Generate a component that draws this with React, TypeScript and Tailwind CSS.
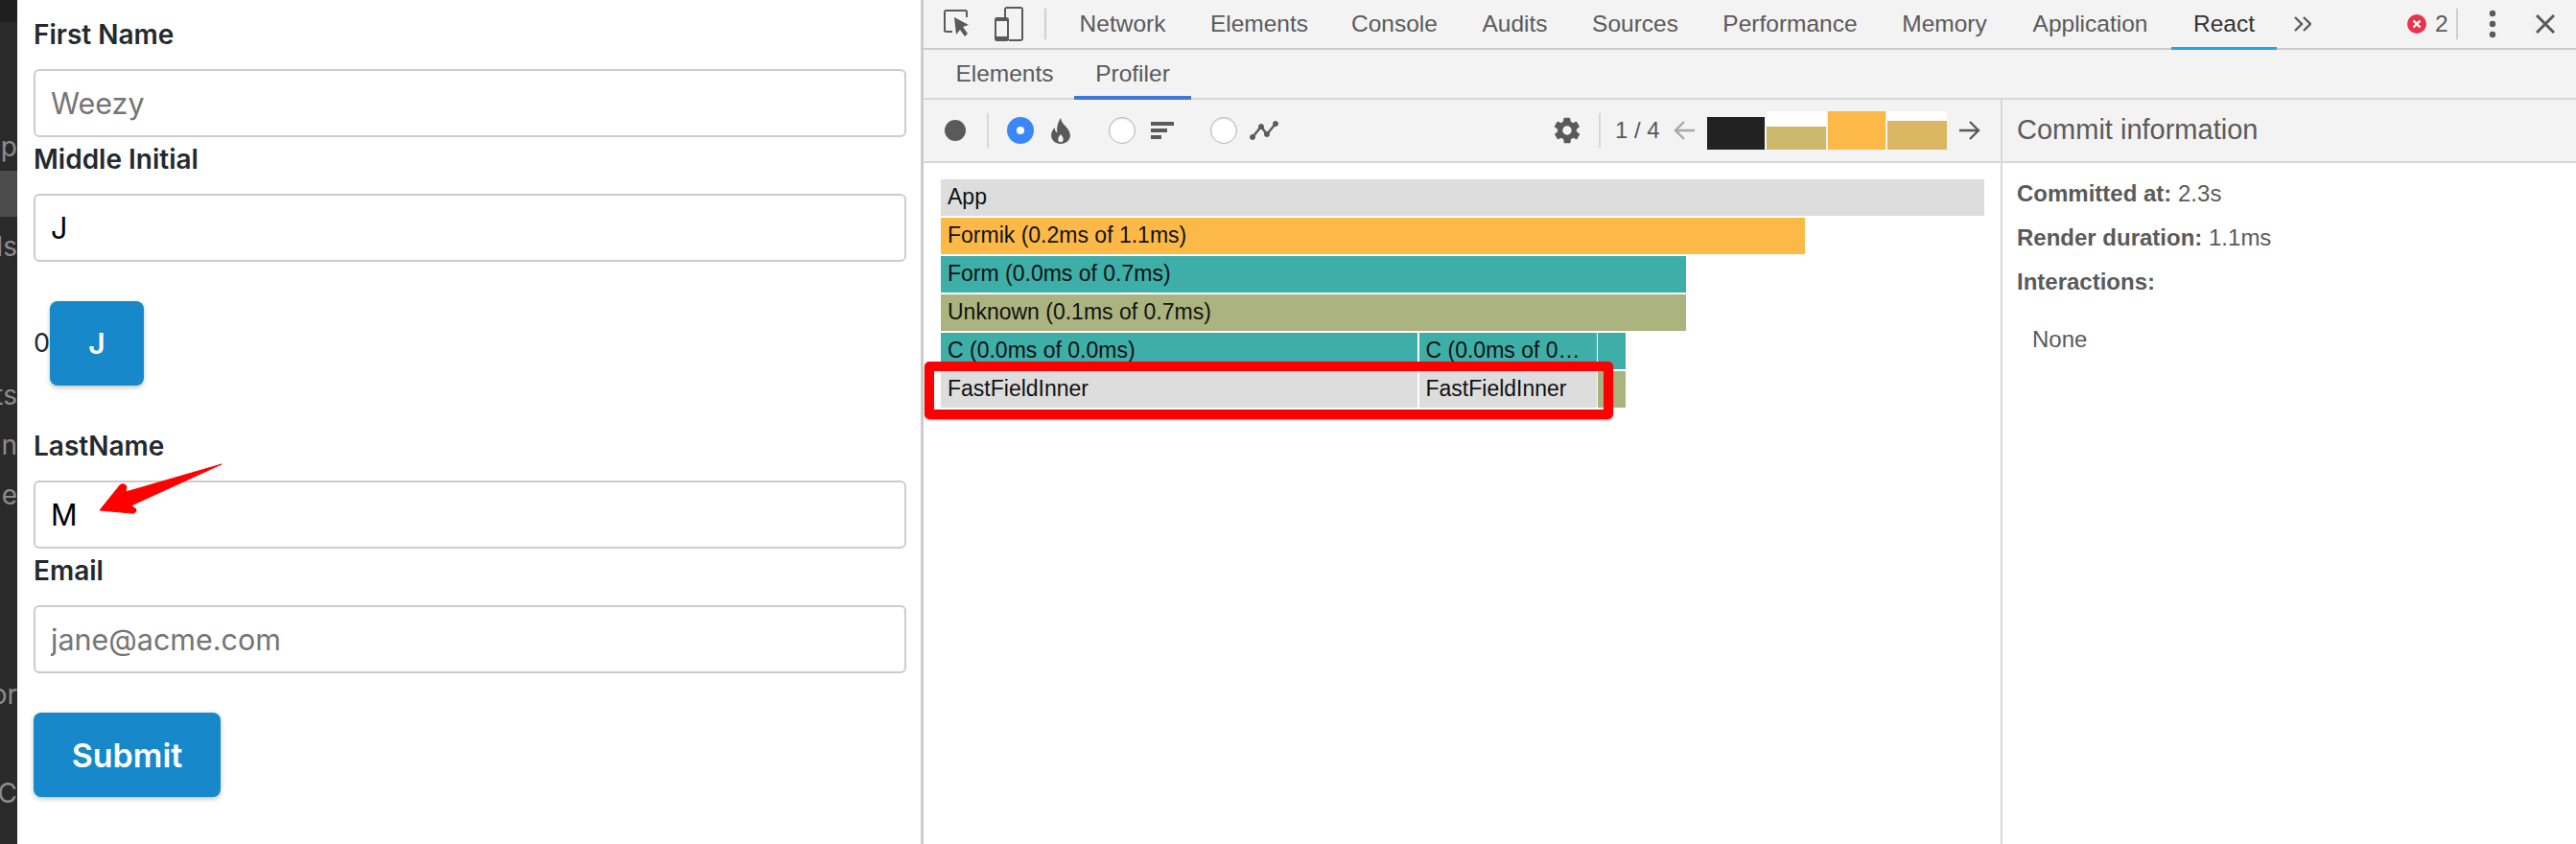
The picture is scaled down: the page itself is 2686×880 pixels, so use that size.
// Form page next to the React devtools profiler, with the two annotations on top

import React from 'react';

const FORM_FONT = "font-['Inter','Noto_Sans',sans-serif]";

const SIDE_ROWS: { text: string; active?: boolean }[] = [
  { text: '' },
  { text: '' },
  { text: 'p' },
  { text: '', active: true },
  { text: 'ds' },
  { text: '' },
  { text: '' },
  { text: 'nts' },
  { text: 'n' },
  { text: 'e' },
  { text: '' },
  { text: '' },
  { text: '' },
  { text: 'or' },
  { text: '' },
  { text: 'C' },
];

const MAIN_TABS = [
  { label: 'Network', w: 'w-[139px]' },
  { label: 'Elements', w: 'w-[146px]' },
  { label: 'Console', w: 'w-[136px]' },
  { label: 'Audits', w: 'w-[115px]' },
  { label: 'Sources', w: 'w-[136px]' },
  { label: 'Performance', w: 'w-[187px]' },
  { label: 'Memory', w: 'w-[135px]' },
  { label: 'Application', w: 'w-[169px]' },
];

interface FlameBar {
  label: string;
  w: string;
  bg: string;
}

const FLAME_ROWS: FlameBar[][] = [
  [{ label: 'App', w: 'w-[1088px]', bg: 'bg-[#dddddd]' }],
  [{ label: 'Formik (0.2ms of 1.1ms)', w: 'w-[901px]', bg: 'bg-[#fdb947]' }],
  [{ label: 'Form (0.0ms of 0.7ms)', w: 'w-[777px]', bg: 'bg-[#3eaea8]' }],
  [{ label: 'Unknown (0.1ms of 0.7ms)', w: 'w-[777px]', bg: 'bg-[#abb37f]' }],
  [
    { label: 'C (0.0ms of 0.0ms)', w: 'w-[497px]', bg: 'bg-[#3eaea8]' },
    { label: 'C (0.0ms of 0…', w: 'w-[185px]', bg: 'bg-[#3eaea8]' },
    { label: '', w: 'w-[29px]', bg: 'bg-[#3eaea8]' },
  ],
  [
    { label: 'FastFieldInner', w: 'w-[497px]', bg: 'bg-[#dddddd]' },
    { label: 'FastFieldInner', w: 'w-[185px]', bg: 'bg-[#dddddd]' },
    { label: '', w: 'w-[29px]', bg: 'bg-[#abb37f]' },
  ],
];

function Field({ label, value, placeholder }: { label: string; value?: string; placeholder?: string }) {
  return (
    <div className="flex flex-col">
      <label className="h-[59px] text-[28px] leading-[46px] font-semibold text-[#24292e]">{label}</label>
      <input
        readOnly
        value={value}
        placeholder={placeholder}
        className="h-[71px] w-[910px] rounded-[6px] border-2 border-[#cccccc] bg-white px-[16px] text-[30.500px] text-black outline-none placeholder:text-[#757575]"
      />
    </div>
  );
}

function SmallIcons() {
  return (
    <div className="flex items-center pl-[21px]">
      <svg width="26" height="32" viewBox="0 0 26 32" className="text-[#5a5a5a]">
        <path d="M9 24H2.5a1.5 1.5 0 0 1-1.5-1.5V3.5A1.5 1.5 0 0 1 2.5 2h20A1.5 1.5 0 0 1 24 3.5V9" fill="none" stroke="currentColor" strokeWidth="2" />
        <path d="M11 9l15 8-6 2 5 7-3 3-5-7-4 5z" fill="currentColor" />
      </svg>
      <svg width="30" height="36" viewBox="0 0 30 36" className="ml-[27px] text-[#5a5a5a]">
        <path d="M11 12V3a2 2 0 0 1 2-2h14a2 2 0 0 1 2 2v30a2 2 0 0 1-2 2H15" fill="none" stroke="currentColor" strokeWidth="2" />
        <rect x="1" y="12" width="13" height="23" rx="1.5" fill="none" stroke="currentColor" strokeWidth="2" />
        <rect x="1" y="31" width="13" height="4" fill="currentColor" />
        <rect x="1" y="12" width="13" height="3" fill="currentColor" />
      </svg>
      <div className="ml-[22px] h-[32px] w-[2px] bg-[#cfcfcf]" />
    </div>
  );
}

function ModeRadio({ on }: { on?: boolean }) {
  if (on) {
    return (
      <span className="flex h-[28px] w-[28px] items-center justify-center rounded-full bg-[#3b87f7]">
        <span className="block h-[8px] w-[8px] rounded-full bg-white" />
      </span>
    );
  }
  return <span className="block h-[28px] w-[28px] rounded-full border border-[#b5b5b5] bg-white shadow-[inset_0_1px_2px_rgba(0,0,0,0.12)]" />;
}

function CommitChart() {
  const bars = [
    { w: 'w-[60px]', h: 'h-[34px]', bg: 'bg-[#222222]', back: '' },
    { w: 'w-[62px]', h: 'h-[24px]', bg: 'bg-[#ceb86d]', back: 'bg-white' },
    { w: 'w-[60px]', h: 'h-[40px]', bg: 'bg-[#fdb947]', back: 'bg-white' },
    { w: 'w-[62px]', h: 'h-[30px]', bg: 'bg-[#dcb763]', back: 'bg-white' },
  ];
  return (
    <div className="flex h-[40px] gap-[2px]">
      {bars.map((b, i) => (
        <div key={i} className={`flex items-end ${b.w} ${b.back}`}>
          <div className={`w-full ${b.h} ${b.bg}`} />
        </div>
      ))}
    </div>
  );
}

function Arrow({ dir, color }: { dir: 'left' | 'right'; color: string }) {
  return (
    <svg width="22" height="20" viewBox="0 0 22 20" fill="none" stroke={color} strokeWidth="2.4">
      {dir === 'left' ? <path d="M22 10H2M11 1l-9 9 9 9" /> : <path d="M0 10h20M11 1l9 9-9 9" />}
    </svg>
  );
}

export default function App() {
  return (
    <div className="relative flex h-[880px] w-[2686px] overflow-hidden bg-white">
      {/* clipped docs sidebar */}
      <div className="flex w-[18px] shrink-0 flex-col overflow-hidden bg-[#2b2a2a] font-['Inter',sans-serif] text-[28px] text-[#8c8c8c]">
        <div className="h-[23px] shrink-0 bg-[#1f1f1f]" />
        {SIDE_ROWS.map((row, i) => (
          <div key={i} className="flex h-[51.900px] shrink-0 items-center justify-end whitespace-nowrap">
            {row.active ? <div className="mb-[5px] h-[48px] w-full bg-[#4c4b4b]" /> : row.text}
          </div>
        ))}
      </div>

      {/* form */}
      <div className={`w-[942px] shrink-0 pt-[13px] pl-[17px] ${FORM_FONT}`}>
        <Field label="First Name" placeholder="Weezy" />
        <Field label="Middle Initial" value="J" />
        <div className="mt-[41px] mb-[40px] flex h-[88px] items-center text-[27px] text-[#24292e]">
          <span className="w-[17px]">0</span>
          <button className="h-[88px] w-[98px] rounded-[8px] bg-[#1789cb] text-[30px] font-semibold text-white shadow-[0_2px_5px_rgba(0,0,0,0.25)]">
            J
          </button>
        </div>
        <Field label="LastName" value="M" />
        <Field label="Email" placeholder="jane@acme.com" />
        <button className="mt-[41px] h-[88px] w-[195px] rounded-[8px] bg-[#1789cb] text-[34px] font-semibold text-white shadow-[0_2px_5px_rgba(0,0,0,0.25)]">
          Submit
        </button>
      </div>

      {/* devtools */}
      <div className="flex min-w-0 flex-1 flex-col border-l-[3px] border-[#cccccc] bg-white font-['Liberation_Sans',sans-serif] text-[24.500px] text-[#5a5a5a]">
        <div className="flex h-[52px] shrink-0 items-center border-b-2 border-[#cccccc] bg-[#f3f3f3]">
          <SmallIcons />
          <div className="ml-[10px] flex h-full items-center">
            {MAIN_TABS.map((t) => (
              <div key={t.label} className={`flex h-full items-center justify-center ${t.w}`}>
                {t.label}
              </div>
            ))}
            <div className="relative flex h-full w-[110px] items-center justify-center text-[#333333]">
              React
              <div className="absolute right-0 bottom-[-2px] left-0 h-[3px] bg-[#1ea7f0]" />
            </div>
          </div>
          <svg width="18" height="16" viewBox="0 0 18 16" fill="none" stroke="#5a5a5a" strokeWidth="2.4" className="ml-[18px]">
            <path d="M1 1l7 7-7 7M10 1l7 7-7 7" />
          </svg>
          <svg width="20" height="20" viewBox="0 0 20 20" className="ml-[100px]">
            <circle cx="10" cy="10" r="10" fill="#e8344a" />
            <path d="M6.5 6.5l7 7M13.5 6.5l-7 7" stroke="#fff" strokeWidth="2.4" />
          </svg>
          <span className="ml-[9px]">2</span>
          <div className="ml-[8px] h-[32px] w-[2px] bg-[#cfcfcf]" />
          <svg width="8" height="30" viewBox="0 0 8 30" fill="#5a5a5a" className="ml-[32px]">
            <circle cx="4" cy="4" r="3.2" />
            <circle cx="4" cy="15" r="3.2" />
            <circle cx="4" cy="26" r="3.2" />
          </svg>
          <svg width="20" height="20" viewBox="0 0 20 20" fill="none" stroke="#5a5a5a" strokeWidth="3" className="ml-[41px]">
            <path d="M1 1l18 18M19 1L1 19" />
          </svg>
        </div>

        <div className="flex h-[52px] shrink-0 items-center border-b-2 border-[#d8d8d8] bg-[#f3f3f3] pl-[12px]">
          <div className="flex h-full w-[145px] items-center justify-center">Elements</div>
          <div className="relative flex h-full w-[122px] items-center justify-center">
            Profiler
            <div className="absolute right-0 bottom-[-2px] left-0 h-[4px] bg-[#3b78d8]" />
          </div>
        </div>

        <div className="flex min-h-0 flex-1">
          {/* flame chart side */}
          <div className="flex w-[1125px] shrink-0 flex-col border-r-2 border-[#d8d8d8]">
            <div className="flex h-[66px] shrink-0 items-center border-b-2 border-[#d8d8d8] bg-[#f3f3f3] pl-[22px]">
              <span className="block h-[22px] w-[22px] rounded-full bg-[#5a5a5a]" />
              <div className="ml-[22px] h-[36px] w-[2px] bg-[#d8d8d8]" />
              <div className="ml-[19px]">
                <ModeRadio on />
              </div>
              <svg width="20" height="27" viewBox="0 0 22 30" fill="#5a5a5a" className="ml-[18px]">
                <path d="M11 0c1 5 3 7 6 10 3 3 5 7 5 10 0 6-5 10-11 10S0 26 0 20c0-4 2-7 4-9 0 3 1 5 3 6C6 11 8 4 11 0z" />
                <path d="M11 19c1.500 2 3 3.500 3 6a3 3 0 0 1-6 0c0-2.500 1.500-4 3-6z" fill="#f3f3f3" />
              </svg>
              <div className="ml-[40px]">
                <ModeRadio />
              </div>
              <svg width="24" height="18" viewBox="0 0 24 18" fill="#5a5a5a" className="ml-[16px]">
                <rect x="0" y="0" width="24" height="4" />
                <rect x="0" y="7" width="17" height="4" />
                <rect x="0" y="14" width="11" height="4" />
              </svg>
              <div className="ml-[38px]">
                <ModeRadio />
              </div>
              <svg width="30" height="20" viewBox="0 0 30 20" fill="#5a5a5a" stroke="#5a5a5a" className="ml-[13px]">
                <path d="M3 17L12 6l6 8 9-11" fill="none" strokeWidth="2.4" />
                <circle cx="3" cy="17" r="2.500" />
                <circle cx="12" cy="6" r="2.500" />
                <circle cx="18" cy="14" r="2.500" />
                <circle cx="27" cy="3" r="2.500" />
              </svg>
              <svg width="32" height="32" viewBox="0 0 24 24" fill="#5a5a5a" className="ml-[285px]">
                <path d="M19.400 13a7.500 7.500 0 0 0 0-2l2.100-1.600a.5.5 0 0 0 .1-.6l-2-3.500a.5.5 0 0 0-.6-.2l-2.500 1a7.300 7.300 0 0 0-1.700-1l-.4-2.700a.5.5 0 0 0-.5-.4h-4a.5.5 0 0 0-.5.4l-.4 2.700a7.300 7.300 0 0 0-1.700 1l-2.500-1a.5.5 0 0 0-.6.2l-2 3.500a.5.5 0 0 0 .1.600L4.600 11a7.500 7.500 0 0 0 0 2l-2.100 1.600a.5.5 0 0 0-.1.600l2 3.500a.5.5 0 0 0 .6.2l2.500-1a7.300 7.300 0 0 0 1.700 1l.4 2.700a.5.5 0 0 0 .5.400h4a.5.5 0 0 0 .5-.4l.4-2.700a7.300 7.300 0 0 0 1.700-1l2.500 1a.5.5 0 0 0 .6-.2l2-3.500a.5.5 0 0 0-.1-.6zM12 15.500a3.500 3.500 0 1 1 0-7 3.500 3.500 0 0 1 0 7z" />
              </svg>
              <div className="ml-[17px] h-[36px] w-[2px] bg-[#d8d8d8]" />
              <span className="ml-[15px] w-[48px] whitespace-nowrap text-[24px]">1 / 4</span>
              <div className="ml-[13px]">
                <Arrow dir="left" color="#a8a8a8" />
              </div>
              <div className="ml-[13px]">
                <CommitChart />
              </div>
              <div className="ml-[13px]">
                <Arrow dir="right" color="#5a5a5a" />
              </div>
            </div>

            <div className="flex flex-col gap-[2px] pt-[17px] pl-[18px] text-[23px] text-[#111111]">
              {FLAME_ROWS.map((row, i) => (
                <div key={i} className="flex h-[38px] gap-[1.500px]">
                  {row.map((bar, j) => (
                    <div
                      key={j}
                      className={`flex h-full items-center overflow-hidden whitespace-nowrap pb-[2px] pl-[7px] ${bar.w} ${bar.bg}`}
                    >
                      {bar.label}
                    </div>
                  ))}
                </div>
              ))}
            </div>
          </div>

          {/* commit info */}
          <div className="flex min-w-0 flex-1 flex-col text-[24px]">
            <div className="flex h-[66px] shrink-0 items-center border-b-2 border-[#d8d8d8] bg-[#f3f3f3] pl-[15px] text-[29px]">
              Commit information
            </div>
            <div className="flex flex-col gap-[18px] pt-[18px] pl-[15px] leading-[28px]">
              <div><b>Committed at:</b> 2.3s</div>
              <div><b>Render duration:</b> 1.1ms</div>
              <div><b>Interactions:</b></div>
              <div className="pt-[14px] pl-[16px]">None</div>
            </div>
          </div>
        </div>
      </div>

      {/* annotation: red box around the FastFieldInner row */}
      <div className="absolute top-[377px] left-[964px] h-[60px] w-[718px] rounded-[5px] border-[10px] border-[#ff0000] shadow-[0_1px_2px_rgba(0,0,0,0.4)]" />

      {/* annotation: arrow pointing at the M */}
      <svg width="140" height="60" viewBox="100 480 140 60" className="absolute top-[480px] left-[100px]">
        <path
          d="M104 532L125 506Q129 503 132 507L131 513L231 484L137 527L142 531Q142 536 137 535Z"
          fill="#ff0000"
          stroke="#ff0000"
          strokeWidth="1"
          strokeLinejoin="round"
        />
      </svg>
    </div>
  );
}
